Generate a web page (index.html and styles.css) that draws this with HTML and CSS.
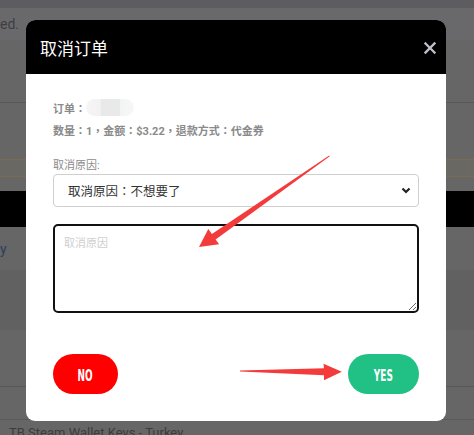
FILE: index.html
```html
<!DOCTYPE html>
<html lang="zh-CN">
<head>
<meta charset="utf-8">
<title>取消订单</title>
<link rel="stylesheet" href="styles.css">
</head>
<body>
<div class="page">
  <div class="topbar"></div>
  <div class="notice"><span class="notice-text">ed.</span></div>
  <div class="row row-a"></div>
  <div class="row row-b"></div>
  <div class="warn"></div>
  <div class="row row-c"></div>
  <div class="blackbar"></div>
  <div class="row row-d"><span class="edge-text">y</span></div>
  <div class="row row-e"></div>
  <div class="row row-f"></div>
  <div class="row row-g"></div>
  <div class="row row-h"><span class="item-text">TB Steam Wallet Keys - Turkey</span></div>
</div>

<div class="modal">
  <div class="modal-head">
    <span class="modal-title">取消订单</span>
    <svg class="close" width="14" height="14" viewBox="0 0 14 14"><path d="M2.5 2.5L11.5 11.5M11.5 2.5L2.5 11.5" stroke="#bfc0cc" stroke-width="2.3" stroke-linecap="square"/></svg>
  </div>
  <div class="modal-body">
    <div class="order-line"><span class="info" lang="zh-TW">订单：</span><span class="blur"></span></div>
    <div class="info info-line" lang="zh-TW">数量：1，金额：$3.22，退款方式：代金券</div>
    <div class="label">取消原因:</div>
    <div class="select">
      <span class="select-text" lang="zh-TW">取消原因：不想要了</span>
      <svg class="chev" width="10" height="7" viewBox="0 0 10 7"><path d="M1.5 1.5L5 5L8.5 1.5" fill="none" stroke="#222" stroke-width="2.2"/></svg>
    </div>
    <textarea class="reason" placeholder="取消原因"></textarea>
    <div class="actions">
      <button class="btn btn-no"><span class="btn-label">NO</span></button>
      <button class="btn btn-yes"><span class="btn-label">YES</span></button>
    </div>
  </div>
</div>

<svg class="arrows" width="474" height="435" viewBox="0 0 474 435">
  <polygon fill="#f43b3b" points="329.8,156.2 215.6,239.4 219.1,244.3 199,247 208.3,229.0 211.9,234.0 329.2,155.6"/>
  <polygon fill="#f43b3b" points="240,370.4 324,368.2 323.5,363.8 341.8,371.8 324,380.2 324,375.2 240,371.6"/>
</svg>
</body>
</html>
```

FILE: styles.css
```css
html, body {
  margin: 0;
  padding: 0;
}
body {
  width: 474px;
  height: 435px;
  overflow: hidden;
  background: #666666;
  font-family: "Roboto", "Noto Sans CJK TC", sans-serif;
  position: relative;
}
.page {
  display: flex;
  flex-direction: column;
}
.topbar {
  height: 8px;
  background: #5d5d61;
}
.notice {
  height: 32px;
  background: #69696c;
  display: flex;
  align-items: center;
}
.notice-text {
  font-size: 14px;
  color: #3e3e42;
}
.row {
  background: #666666;
}
.row-a {
  height: 62px;
  border-bottom: 1px solid #575757;
}
.row-b {
  height: 56px;
}
.warn {
  height: 16px;
  background: #6a6862;
  border-top: 1px solid #7b6a52;
  border-bottom: 1px solid #7b6a52;
}
.row-c {
  height: 14px;
}
.blackbar {
  height: 36px;
  background: #000;
}
.row-d {
  height: 43px;
  display: flex;
  align-items: center;
}
.edge-text {
  font-size: 14px;
  color: #2d3d5c;
}
.row-e {
  height: 60px;
  background: #616161;
}
.row-f {
  height: 56px;
  border-bottom: 1px solid #575757;
}
.row-g {
  height: 32px;
  border-bottom: 1px solid #5a5a5a;
}
.row-h {
  height: 14px;
  padding-left: 9px;
}
.item-text {
  display: block;
  font-size: 13px;
  line-height: 16px;
  margin-top: 5px;
  color: #3c3c3c;
}

.modal {
  position: absolute;
  left: 26px;
  top: 20px;
  width: 420px;
  height: 401px;
  background: #fff;
  border-radius: 9px;
  overflow: hidden;
  display: flex;
  flex-direction: column;
}
.modal-head {
  height: 54px;
  background: #000;
  display: flex;
  align-items: center;
  justify-content: space-between;
  padding: 0 9px 0 14px;
}
.modal-title {
  color: #fff;
  font-size: 17px;
  font-family: "Noto Sans CJK SC", sans-serif;
}
.close {
  display: block;
  margin-top: 1px;
}
.modal-body {
  padding: 25px 27px 27px;
  display: flex;
  flex-direction: column;
}
.order-line {
  height: 17px;
  display: flex;
  align-items: center;
}
.info {
  font-size: 11px;
  font-weight: 700;
  color: #8a8a8a;
}
.blur {
  width: 48px;
  height: 17px;
  border-radius: 9px;
  background: linear-gradient(90deg, #f6f6f6 0%, #f2f2f2 30%, #e9e9e9 32%, #e9e9e9 70%, #f3f4f4 72%, #f7f7f7 100%);
}
.info-line {
  margin-top: 8px;
  line-height: 16px;
}
.label {
  margin-top: 19px;
  font-size: 11px;
  line-height: 14px;
  color: #8c8c8c;
}
.select {
  margin-top: 1px;
  height: 33px;
  box-sizing: border-box;
  border: 1px solid #cfcfcf;
  border-radius: 4px;
  display: flex;
  align-items: center;
  justify-content: space-between;
  padding: 0 7px 0 14px;
}
.select-text {
  font-size: 12.5px;
  color: #333;
}
.chev {
  display: block;
}
.reason {
  margin: 17px 0 0;
  height: 89px;
  box-sizing: border-box;
  border: 2px solid #111;
  border-radius: 5px;
  padding: 8px 9px;
  font-family: "Noto Sans CJK SC", sans-serif;
  font-size: 11px;
  resize: vertical;
  outline: none;
  display: block;
  width: 100%;
}
.reason::placeholder {
  color: #cfcfcf;
}
.actions {
  margin-top: 41px;
  display: flex;
  justify-content: space-between;
}
.btn {
  height: 40px;
  border: none;
  border-radius: 20px;
  padding: 0;
  color: #fff;
  display: flex;
  align-items: center;
  justify-content: center;
  cursor: pointer;
}
.btn-no {
  width: 65px;
  background: #ff0000;
}
.btn-yes {
  width: 71px;
  background: #21c185;
}
.btn-label {
  display: inline-block;
  font-family: "DejaVu Sans Condensed", "DejaVu Sans", sans-serif;
  font-weight: 700;
  font-size: 16px;
  transform: scaleX(0.62);
  margin-top: 2px;
}
.arrows {
  position: absolute;
  left: 0;
  top: 0;
  pointer-events: none;
}
```
